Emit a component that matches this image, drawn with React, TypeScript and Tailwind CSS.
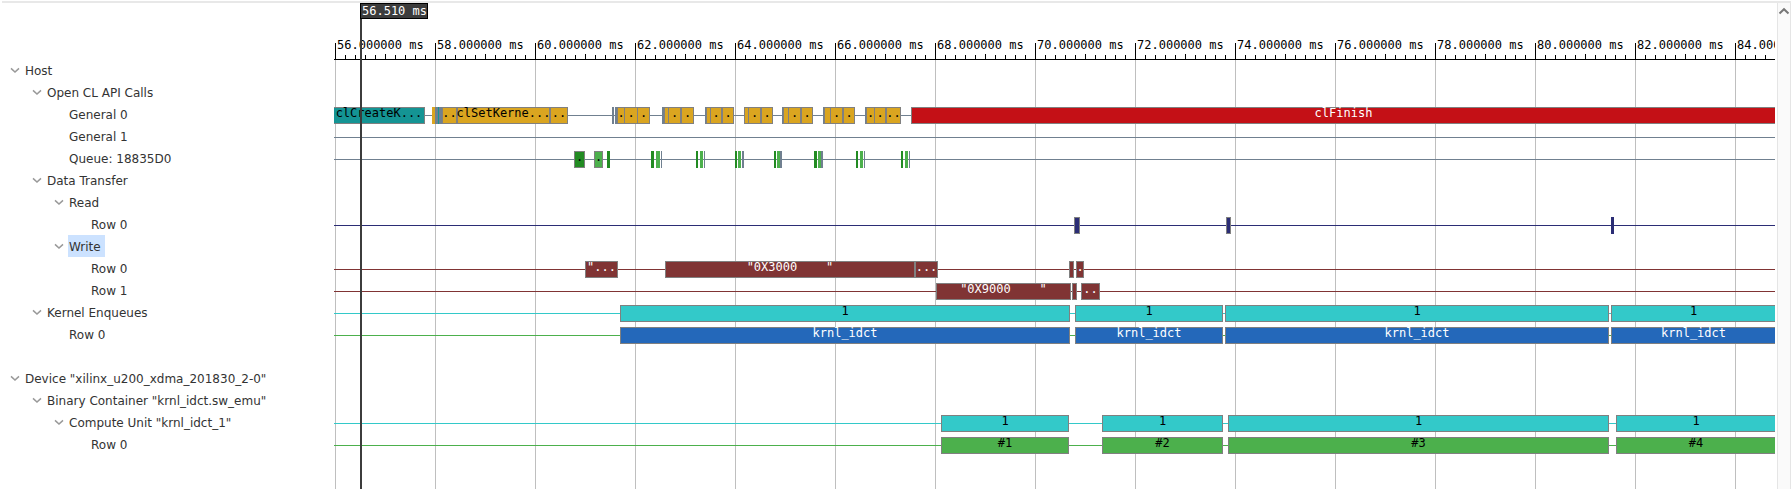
import React from "react";

type Span = { from: number; to?: number; fill: string; text?: string; flat?: boolean };
type Row = { name?: string; depth?: number; branch?: boolean; selected?: boolean; line?: string; spans?: Span[] };

/* Width of the tree column; span positions are measured from the tree's left edge. */
const TREE_WIDTH = 334;

const GOLD = "bg-[#daa520] text-black";
const SLATE = "bg-[#708090]";
const TEAL = "bg-[#149494] text-black";
const RED = "bg-[#c41016] text-white";
const FOREST = "bg-[#228b22] text-black";
const GREEN = "bg-[#4cb04c] text-black";
const NAVY = "bg-[#2b2d75]";
const MAROON = "bg-[#803434] text-white";
const CYAN = "bg-[#33c9c9] text-black";
const BLUE = "bg-[#2468ba] text-white";

const box = (from: number, to: number | undefined, fill: string, text?: string): Span => ({ from, to, fill, text });
const flat = (from: number, to: number, fill: string): Span => ({ from, to, fill, flat: true });

const apiCalls: Span[] = [
  box(334, 425, TEAL, "clCreateK..."),
  flat(432, 435, GOLD), flat(435, 438, SLATE), flat(438, 439, TEAL), flat(439, 442, SLATE),
  box(442, 457, GOLD, ".."), box(457, 550, GOLD, "clSetKerne..."), box(550, 568, GOLD, ".."),
  flat(612, 614, SLATE), flat(615, 617, SLATE),
  box(617, 625, GOLD, "."), box(624, 638, GOLD, "."), box(637, 650, GOLD, "."),
  flat(662, 664, SLATE), box(664, 669, GOLD), box(668, 681, GOLD, "."), box(681, 694, GOLD, "."),
  flat(705, 707, SLATE), box(706, 711, GOLD), box(710, 722, GOLD, "."), box(722, 734, GOLD, "."),
  flat(744, 745, SLATE), box(744, 749, GOLD), box(748, 761, GOLD, "."), box(761, 773, GOLD, "."),
  flat(782, 783, SLATE), box(783, 789, GOLD), box(788, 801, GOLD, "."), box(801, 813, GOLD, "."),
  flat(823, 824, SLATE), box(824, 831, GOLD), box(830, 843, GOLD, "."), box(843, 855, GOLD, "."),
  flat(865, 866, SLATE), box(866, 875, GOLD, "."), box(874, 886, GOLD, "."), box(886, 901, GOLD, ".."),
  box(911, undefined, RED, "clFinish"),
];

const queue: Span[] = [
  box(574, 585, FOREST, "."), box(594, 603, GREEN, "."), flat(607, 610, FOREST),
  flat(651, 654, FOREST), flat(656, 660, GREEN), flat(661, 662, SLATE),
  flat(696, 698, FOREST), flat(700, 703, GREEN), flat(704, 705, SLATE),
  flat(735, 737, FOREST), flat(738, 741, GREEN), flat(742, 744, SLATE),
  flat(774, 776, FOREST), flat(777, 780, GREEN), flat(780, 782, SLATE),
  flat(814, 817, FOREST), flat(818, 821, GREEN), flat(821, 823, SLATE),
  flat(856, 858, FOREST), flat(860, 863, GREEN), flat(864, 865, SLATE),
  flat(901, 903, FOREST), flat(905, 908, GREEN), flat(909, 910, SLATE),
];

const enqueues = (fill: string, text: string): Span[] => [
  box(620, 1070, fill, text), box(1075, 1223, fill, text), box(1225, 1609, fill, text), box(1611, undefined, fill, text),
];

const compute = (fill: string, texts: string[]): Span[] => [
  box(941, 1069, fill, texts[0]), box(1102, 1223, fill, texts[1]), box(1228, 1609, fill, texts[2]), box(1616, undefined, fill, texts[3]),
];

const rows: Row[] = [
  { name: "Host", depth: 0, branch: true },
  { name: "Open CL API Calls", depth: 1, branch: true },
  { name: "General 0", depth: 2, line: "bg-[#708090]", spans: apiCalls },
  { name: "General 1", depth: 2, line: "bg-[#708090]" },
  { name: "Queue: 18835D0", depth: 2, line: "bg-[#708090]", spans: queue },
  { name: "Data Transfer", depth: 1, branch: true },
  { name: "Read", depth: 2, branch: true },
  { name: "Row 0", depth: 3, line: "bg-[#2b2d75]", spans: [box(1074, 1080, NAVY), box(1226, 1231, NAVY), flat(1611, 1614, NAVY)] },
  { name: "Write", depth: 2, branch: true, selected: true },
  {
    name: "Row 0", depth: 3, line: "bg-[#803434]",
    spans: [box(585, 618, MAROON, '"...'), box(665, 915, MAROON, '"0X3000    "'), box(915, 938, MAROON, "..."), box(1069, 1074, MAROON), box(1076, 1084, MAROON, ".")],
  },
  {
    name: "Row 1", depth: 3, line: "bg-[#803434]",
    spans: [box(936, 1071, MAROON, '"0X9000    "'), box(1072, 1077, MAROON), box(1081, 1100, MAROON, "..")],
  },
  { name: "Kernel Enqueues", depth: 1, branch: true, line: "bg-[#33c9c9]", spans: enqueues(CYAN, "1") },
  { name: "Row 0", depth: 2, line: "bg-[#4cb04c]", spans: enqueues(BLUE, "krnl_idct") },
  {},
  { name: 'Device "xilinx_u200_xdma_201830_2-0"', depth: 0, branch: true },
  { name: 'Binary Container "krnl_idct.sw_emu"', depth: 1, branch: true },
  { name: 'Compute Unit "krnl_idct_1"', depth: 2, branch: true, line: "bg-[#33c9c9]", spans: compute(CYAN, ["1", "1", "1", "1"]) },
  { name: "Row 0", depth: 3, line: "bg-[#4cb04c]", spans: compute(GREEN, ["#1", "#2", "#3", "#4"]) },
];

const INDENT = ["pl-2.5", "pl-8", "pl-[54px]", "pl-[76px]"];
const divisions = Array.from({ length: 15 }, (_, i) => 56 + i * 2);
const minorTicks = Array.from({ length: 10 }, (_, i) => i);

function TreeRow({ row }: { row: Row }) {
  if (!row.name) return <li className="h-[22px]" />;
  return (
    <li className={`flex h-[22px] items-center ${INDENT[row.depth ?? 0]}`}>
      <span className="flex w-3.5 shrink-0">
        {row.branch && (
          <button type="button" aria-label={`Collapse ${row.name}`} className="flex text-[#999999]">
            <svg width="10" height="6" viewBox="0 0 10 6" fill="none" stroke="currentColor" strokeWidth="1.5">
              <path d="M1 1.4 L5 5 L9 1.4" />
            </svg>
          </button>
        )}
      </span>
      <span className={`h-[22px] whitespace-nowrap pl-px leading-6 ${row.selected ? "bg-[#cce2ff] pr-1" : ""}`}>{row.name}</span>
    </li>
  );
}

function SpanBar({ span }: { span: Span }) {
  const left = span.from - TREE_WIDTH;
  const position = span.to === undefined ? { left, right: 0 } : { left, width: span.to - span.from };
  const edges = span.flat ? "" : span.to === undefined ? "border border-r-0" : left === 0 ? "border border-l-0" : "border";
  return (
    <div className={`absolute top-1 flex h-[17px] justify-center border-[#808080] ${edges} ${span.fill}`} style={position}>
      {span.text && <span className="whitespace-pre leading-[10px]">{span.text}</span>}
    </div>
  );
}

function Ruler() {
  return (
    <div className="-mb-px mt-9 flex h-[21px] overflow-hidden border-b border-black pl-px">
      {divisions.map((ms) => (
        <div key={ms} className="grid w-[100px] shrink-0">
          <div className="flex items-end self-end [grid-area:1/1]">
            {minorTicks.map((i) => (
              <span key={i} className={`w-2.5 border-l border-black ${i === 0 ? "h-4" : i === 5 ? "h-[5px]" : "h-1"}`} />
            ))}
          </div>
          <span className="self-start whitespace-nowrap pl-0.5 leading-3 [grid-area:1/1]">{ms}.000000 ms</span>
        </div>
      ))}
    </div>
  );
}

export default function App() {
  return (
    <div className="flex min-h-screen flex-col bg-white pt-px font-['DejaVu_Sans',sans-serif] text-[12px] text-[#333333]">
      <div className="ml-0.5 h-0.5 bg-[#e8e8e8]" />
      <div className="flex grow">
        <ul className="w-[334px] shrink-0 pt-14">
          {rows.map((row, i) => <TreeRow key={i} row={row} />)}
        </ul>

        <main className="relative mr-0.5 flex min-w-0 grow flex-col overflow-hidden font-['DejaVu_Sans_Mono',monospace] text-black">
          <Ruler />
          <div className="relative grow">
            <div className="absolute inset-x-0 bottom-0 top-px flex overflow-hidden pl-px">
              {divisions.map((ms) => <div key={ms} className="w-[100px] shrink-0 border-l border-[#bfbfbf]" />)}
            </div>
            {rows.map((row, i) => (
              <div key={i} className="relative h-[22px]">
                {row.line && <div className={`absolute inset-x-0 top-3 h-px ${row.line}`} />}
                {row.spans?.map((span, j) => <SpanBar key={j} span={span} />)}
              </div>
            ))}
          </div>
          <div className="absolute inset-y-0 left-[26px] flex flex-col items-start">
            <span className="h-4 whitespace-nowrap border border-black bg-[#3c3c3c] pl-px leading-[14px] text-white">56.510 ms</span>
            <span className="w-0.5 grow bg-[#3c3c3c]" />
          </div>
        </main>

        <div className="w-3.5 shrink-0 border-x border-[#e5e5e5] bg-[#fafafa]">
          <button type="button" aria-label="Scroll up" className="flex w-full justify-center pt-1 text-[#777777]">
            <svg width="12" height="8" viewBox="0 0 12 8" fill="none" stroke="currentColor" strokeWidth="2">
              <path d="M1.5 6.5 L6 2.2 L10.5 6.5" />
            </svg>
          </button>
        </div>
      </div>
    </div>
  );
}
